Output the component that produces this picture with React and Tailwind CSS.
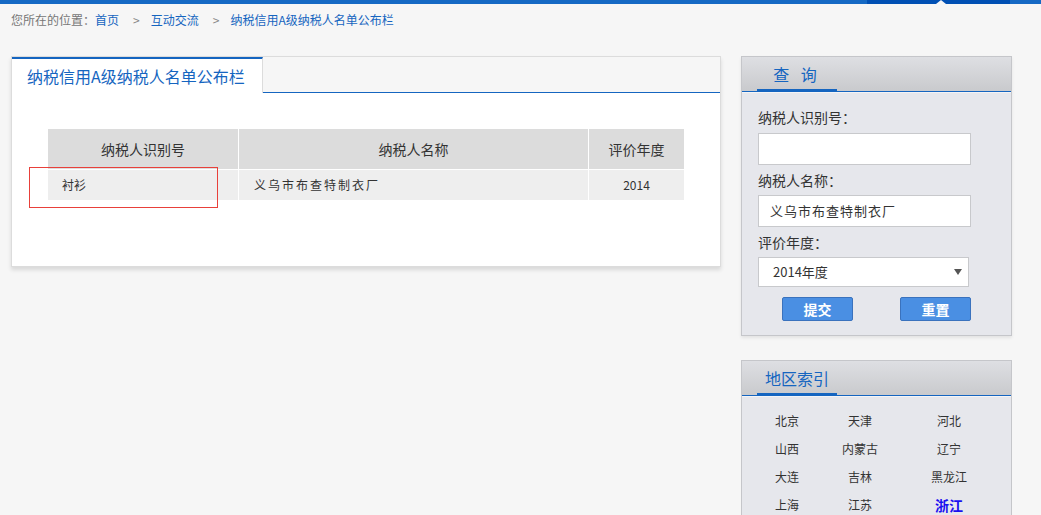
import React from 'react';

const font = { fontFamily: '"Noto Sans CJK SC", "Liberation Sans", sans-serif' };

const areas = [
  ['北京', '天津', '河北'],
  ['山西', '内蒙古', '辽宁'],
  ['大连', '吉林', '黑龙江'],
  ['上海', '江苏', '浙江'],
];

const PanelHeader = ({ title, tracking }) => (
  <div className="h-[35px] bg-gradient-to-b from-[#dedfe3] to-[#c9cacd] border-b border-[#1565c0] flex items-end pl-[15px]">
    <div className={`w-[80px] h-[34px] flex items-center justify-center text-[16px] text-[#1565c0] border-b-[3px] border-[#1565c0] -mb-px ${tracking}`}>
      {title}
    </div>
  </div>
);

const Sep = () => <span className="pl-[14px] pr-[11px] text-[#888]">&gt;</span>;

const App = () => {
  return (
    <div className="min-h-[515px] bg-[#f6f6f6] overflow-hidden" style={font}>
      {/* top bar */}
      <div className="flex h-[4px]">
        <div className="flex-1 bg-[#1569c4]" />
        <div className="w-[143px] bg-[#0050b4] relative">
          <div className="absolute left-[69px] top-0 w-0 h-0 border-l-[5px] border-r-[5px] border-b-[4px] border-l-transparent border-r-transparent border-b-[#f6f6f6]" />
        </div>
        <div className="w-[31px] bg-[#1569c4]" />
      </div>

      {/* breadcrumb */}
      <div className="h-[34px] pl-[11px] flex items-center text-[12px] text-[#777] pb-[2px]">
        <span>您所在的位置：</span>
        <span className="text-[#1565c0]">首页</span>
        <Sep />
        <span className="text-[#1565c0]">互动交流</span>
        <Sep />
        <span className="text-[#1565c0]">纳税信用A级纳税人名单公布栏</span>
      </div>

      <div className="flex items-start pt-[18px] pl-[11px]">
        {/* main card */}
        <div className="w-[710px] h-[211px] bg-white border border-[#dcdcdc] shadow-[0_3px_4px_rgba(0,0,0,0.12)] relative">
          <div className="flex h-[36px] bg-[#f6f6f6] border-b border-[#1565c0]">
            <div className="w-[251px] h-[36px] bg-white border-t-2 border-[#1565c0] border-r border-r-[#dcdcdc] pl-[15px] flex items-center text-[16px] text-[#1565c0]">
              纳税信用A级纳税人名单公布栏
            </div>
          </div>

          <div className="pt-[36px] pl-[36px]">
            <div className="grid grid-cols-[190px_349px_95px] gap-[1px] w-[636px] bg-white">
              <div className="h-[40px] bg-[#dcdcdc] flex items-center justify-center text-[14px] text-[#333]">纳税人识别号</div>
              <div className="h-[40px] bg-[#dcdcdc] flex items-center justify-center text-[14px] text-[#333]">纳税人名称</div>
              <div className="h-[40px] bg-[#dcdcdc] flex items-center justify-center text-[14px] text-[#333]">评价年度</div>
              <div className="h-[30px] bg-[#eeeeee] flex items-center pl-[14px] text-[12px] text-[#333]">衬衫</div>
              <div className="h-[30px] bg-[#eeeeee] flex items-center pl-[15px] text-[12px] tracking-[2px] text-[#333]">义乌市布查特制衣厂</div>
              <div className="h-[30px] bg-[#eeeeee] flex items-center justify-center text-[12px] text-[#333]">2014</div>
            </div>
          </div>

          {/* red highlight annotation */}
          <div className="absolute left-[17px] top-[110px] w-[189px] h-[41px] border border-[#e8403a]" />
        </div>

        {/* right column */}
        <div className="ml-[20px] w-[271px] flex flex-col gap-[24px]">
          <div className="border border-[#c5c6ca] bg-[#e6e7ec] shadow-[0_2px_3px_rgba(0,0,0,0.08)]">
            <PanelHeader title="查 询" tracking="tracking-[4px]" />
            <div className="border-t border-[#f4f4f6] px-[16px] pt-[14px] pb-[14px] text-[14px] text-[#333]">
              <div className="h-[20px] leading-[20px]">纳税人识别号：</div>
              <div className="mt-[6px] w-[213px] h-[32px] bg-white border border-[#c8c9cc]" />
              <div className="mt-[5px] h-[20px] leading-[20px]">纳税人名称：</div>
              <div className="mt-[5px] w-[213px] h-[32px] bg-white border border-[#c8c9cc] flex items-center pl-[11px] text-[13px] tracking-[1px]">
                义乌市布查特制衣厂
              </div>
              <div className="mt-[5px] h-[20px] leading-[20px]">评价年度：</div>
              <div className="mt-[5px] w-[211px] h-[30px] bg-white border border-[#c8c9cc] flex items-center justify-between pl-[14px] pr-[6px] text-[13px]">
                <span>2014年度</span>
                <span className="w-0 h-0 border-l-[4px] border-r-[4px] border-t-[6px] border-l-transparent border-r-transparent border-t-[#555]" />
              </div>
              <div className="mt-[10px] flex pl-[24px] gap-[47px]">
                <button className="w-[71px] h-[24px] bg-[#4a8fe3] border border-[#3a72bd] rounded-[2px] text-white font-bold text-[14px] leading-none">提交</button>
                <button className="w-[71px] h-[24px] bg-[#4a8fe3] border border-[#3a72bd] rounded-[2px] text-white font-bold text-[14px] leading-none">重置</button>
              </div>
            </div>
          </div>

          <div className="border border-[#c5c6ca] bg-[#e6e7ec] h-[200px]">
            <PanelHeader title="地区索引" tracking="" />
            <div className="border-t border-[#f4f4f6] pt-[10px] pl-[15px]">
              {areas.map((row, i) => (
                <div key={i} className="flex h-[28px] items-center text-[12px] text-[#333]">
                  {row.map((name, j) => (
                    <div
                      key={name}
                      className={`text-center ${j === 0 ? 'w-[60px]' : j === 1 ? 'w-[86px]' : 'w-[92px]'} ${name === '浙江' ? 'text-[#1a10f0] font-bold text-[14px]' : ''}`}
                    >
                      {name}
                    </div>
                  ))}
                </div>
              ))}
            </div>
          </div>
        </div>
      </div>
    </div>
  );
};

export default App;
